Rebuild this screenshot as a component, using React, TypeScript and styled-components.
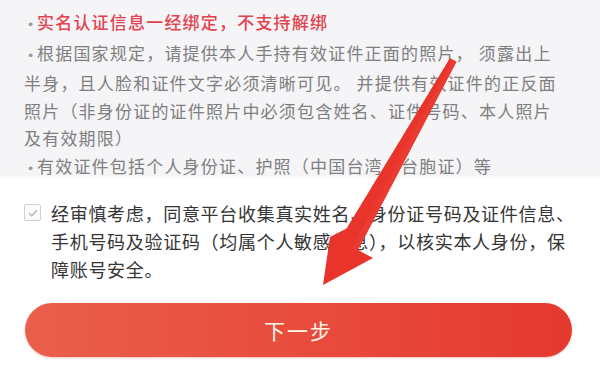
import styled, { createGlobalStyle } from "styled-components";

const GlobalStyle = createGlobalStyle`
  html, body {
    margin: 0;
    padding: 0;
    background: #ffffff;
  }
  body {
    font-family: "Noto Sans CJK SC", "Noto Sans", sans-serif;
  }
`;

const notices = [
  {
    strong: true,
    lines: ["实名认证信息一经绑定，不支持解绑"],
  },
  {
    strong: false,
    lines: [
      "根据国家规定，请提供本人手持有效证件正面的照片， 须露出上",
      "半身，且人脸和证件文字必须清晰可见。 并提供有效证件的正反面",
      "照片（非身份证的证件照片中必须包含姓名、证件号码、本人照片",
      "及有效期限）",
    ],
  },
  {
    strong: false,
    lines: ["有效证件包括个人身份证、护照（中国台湾、台胞证）等"],
  },
];

const agreement = [
  "经审慎考虑，同意平台收集真实姓名、身份证号码及证件信息、",
  "手机号码及验证码（均属个人敏感信息），以核实本人身份，保",
  "障账号安全。",
];

export default function App() {
  return (
    <>
      <GlobalStyle />
      <Page>
        <NoticePanel>
          {notices.map((item, i) => (
            <Notice key={i} $strong={item.strong}>
              {item.lines.map((line, j) => (
                <Line key={j}>
                  {j === 0 && <Bullet>•</Bullet>}
                  {line}
                </Line>
              ))}
            </Notice>
          ))}
        </NoticePanel>

        <AgreeRow>
          <CheckBox>
            <svg width="10" height="8" viewBox="0 0 10 8">
              <path d="M1 4.2 L3.8 6.8 L9 1.2" fill="none" stroke="#b5b5b5" strokeWidth="1.3" />
            </svg>
          </CheckBox>
          <AgreeText>
            {agreement.map((line, i) => (
              <Line key={i}>{line}</Line>
            ))}
          </AgreeText>
        </AgreeRow>

        <NextButton type="button">下一步</NextButton>

        <Arrow viewBox="0 0 600 373" width="600" height="373">
          <polygon
            points="450,58 456.5,61.8 358,250 373,258 323,285 330,237 346.5,228.5"
            fill="#e8342b"
          />
          <polygon points="456.5,61.8 358,250 352,247 452,60" fill="#f04336" opacity="0.45" />
        </Arrow>
      </Page>
    </>
  );
}

const Page = styled.div`
  position: relative;
  width: 600px;
  height: 373px;
  overflow: hidden;
  background: #ffffff;
  display: flex;
  flex-direction: column;
`;

const NoticePanel = styled.div`
  box-sizing: border-box;
  height: 175px;
  padding: 8px 8px 0 24px;
  background: #f5f4f7;
  box-shadow: 0 2px 3px rgba(0, 0, 0, 0.05);
  display: flex;
  flex-direction: column;
`;

const Notice = styled.div<{ $strong: boolean }>`
  color: ${({ $strong }) => ($strong ? "#e2434e" : "#7f7f7f")};
  font-size: 17px;
  letter-spacing: 1.2px;
  line-height: 27.5px;
  font-weight: ${({ $strong }) => ($strong ? 500 : 400)};
`;

const Line = styled.div`
  white-space: nowrap;
`;

const Bullet = styled.span`
  display: inline-block;
  width: 13px;
  font-family: "DejaVu Sans", sans-serif;
  font-size: 13px;
  text-align: center;
  letter-spacing: 0;
  color: #9a9a9a;
`;

const AgreeRow = styled.div`
  display: flex;
  align-items: flex-start;
  gap: 10px;
  padding: 24px 0 0 24px;
`;

const CheckBox = styled.span`
  box-sizing: border-box;
  flex: none;
  width: 17px;
  height: 17px;
  margin-top: 5px;
  border: 1px solid #cfcfcf;
  border-radius: 2px;
  display: flex;
  align-items: center;
  justify-content: center;
  background: #fbfbfb;
`;

const AgreeText = styled.div`
  color: #353535;
  font-size: 18px;
  letter-spacing: 0.7px;
  line-height: 28px;
`;

const NextButton = styled.button`
  box-sizing: border-box;
  align-self: flex-start;
  margin: 20px 0 0 25px;
  width: 547px;
  height: 54px;
  border: none;
  border-radius: 27px;
  background: linear-gradient(90deg, #e95f4b 0%, #e84a3c 55%, #e5392f 100%);
  box-shadow: 0 1px 2px rgba(200, 60, 40, 0.3);
  color: #fff6e8;
  font-family: "Noto Sans CJK SC", "Noto Sans", sans-serif;
  font-size: 21px;
  letter-spacing: 2px;
  cursor: pointer;
`;

const Arrow = styled.svg`
  position: absolute;
  left: 0;
  top: 0;
  pointer-events: none;
`;
